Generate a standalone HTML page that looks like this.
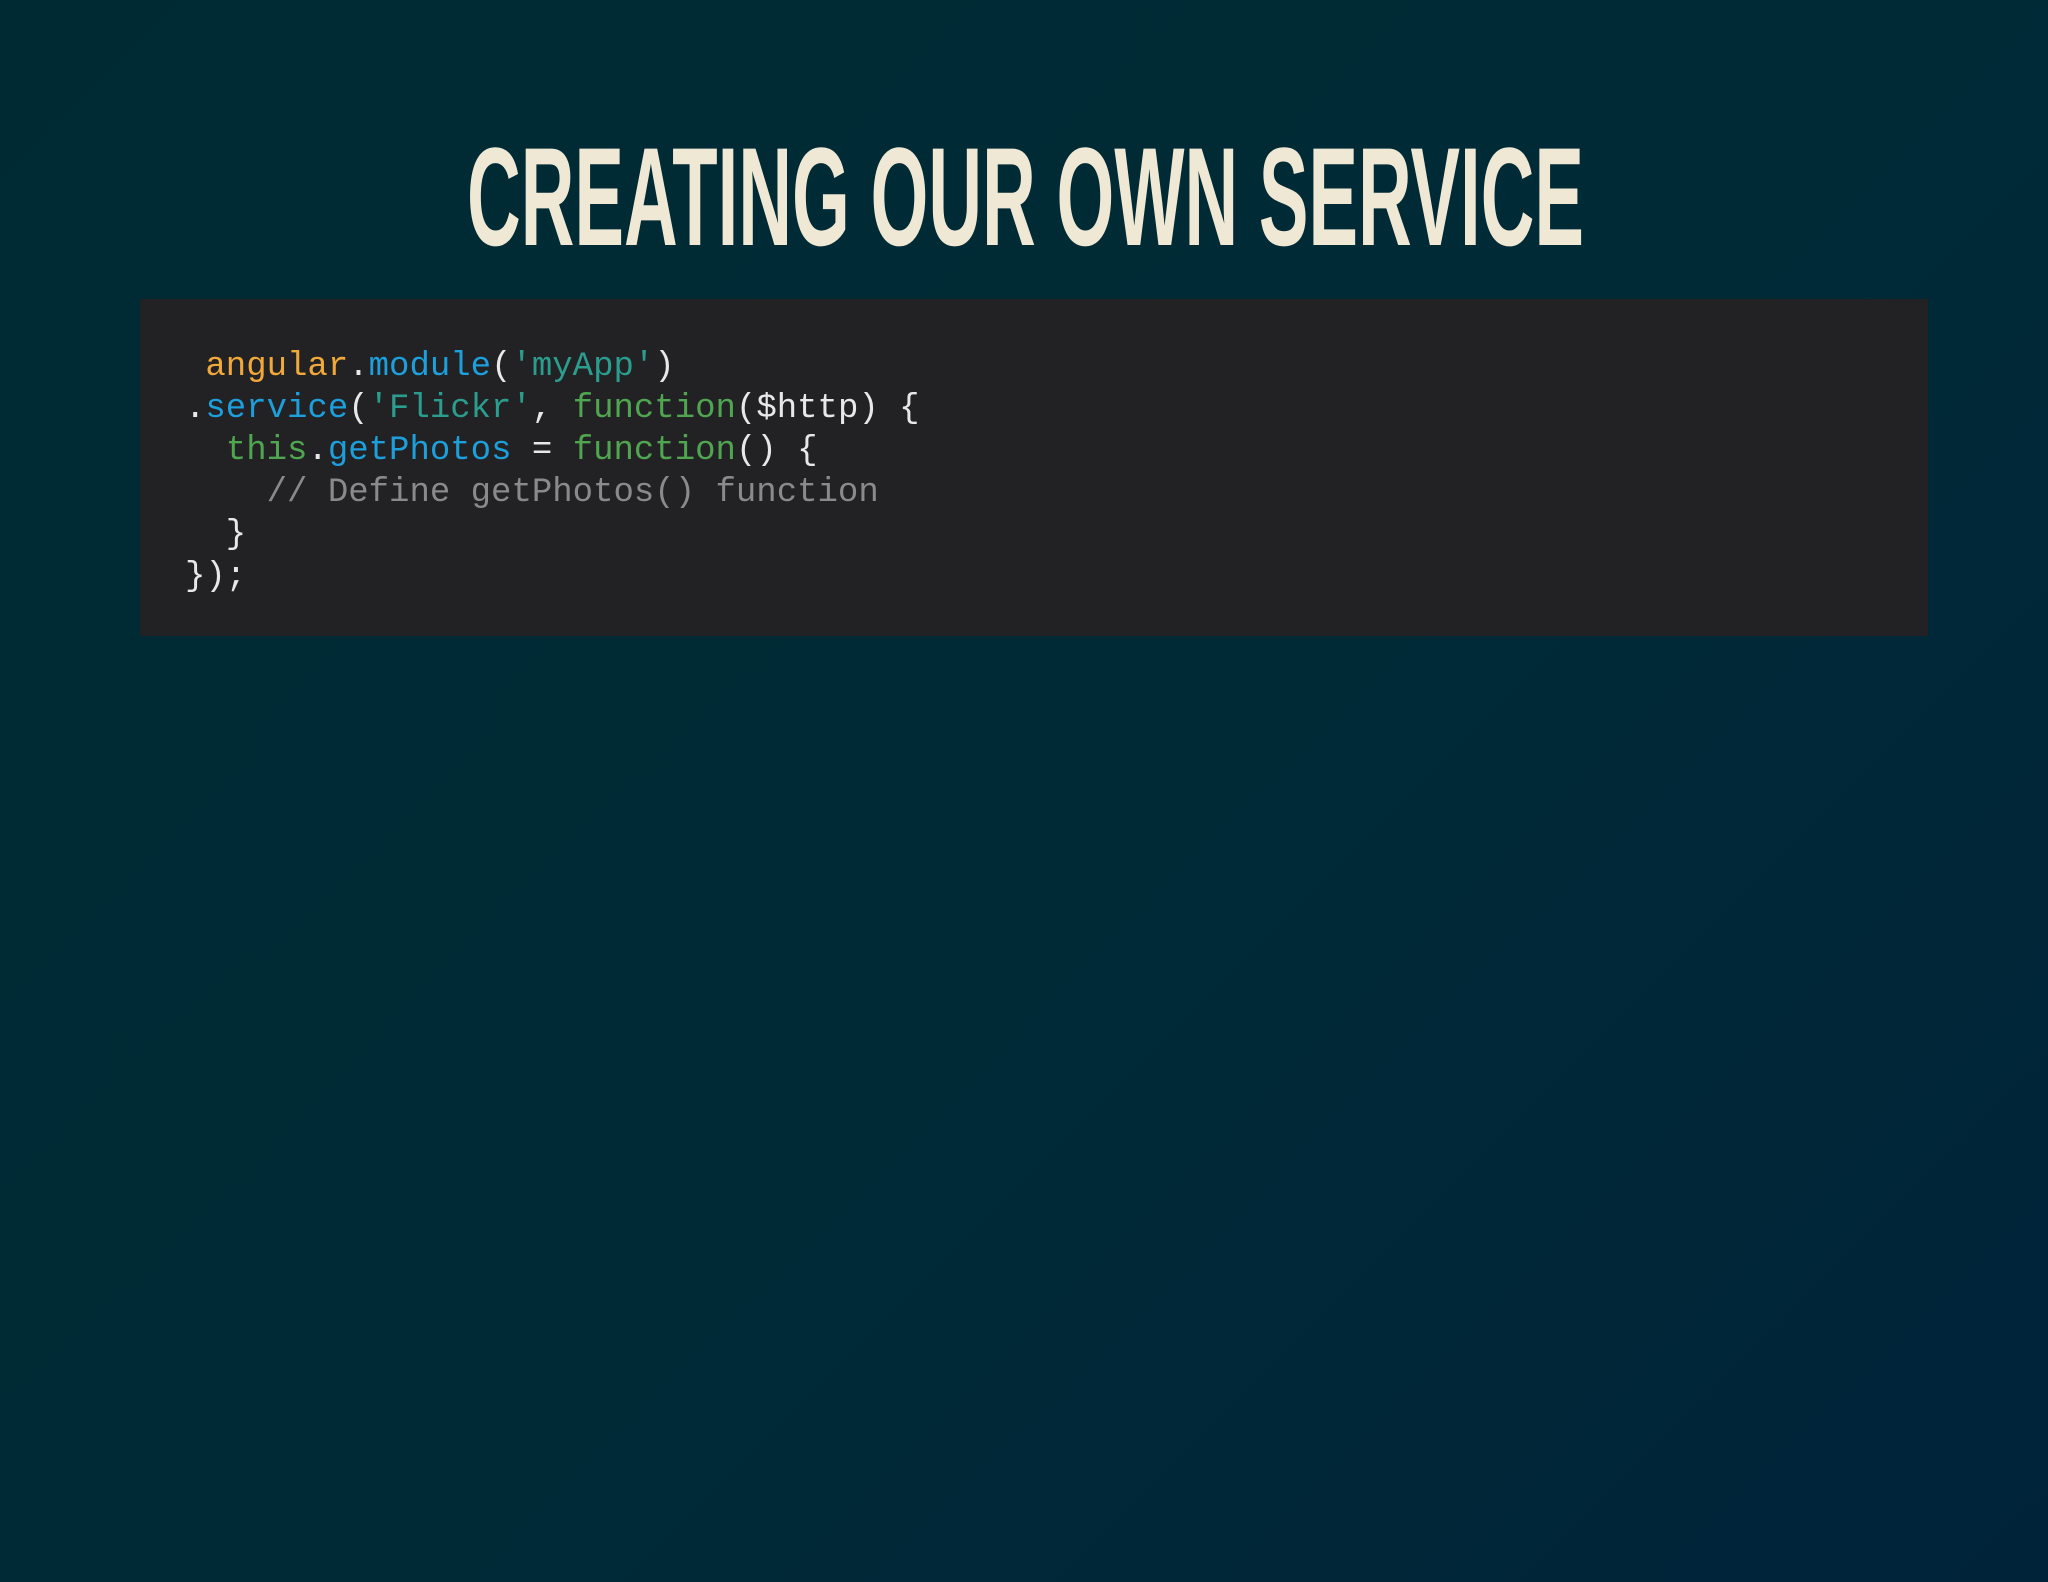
<!DOCTYPE html>
<html>
<head>
<meta charset="utf-8">
<style>
html,body{margin:0;padding:0;}
body{width:2048px;height:1582px;overflow:hidden;background:linear-gradient(135deg,#002a33 0%,#002b36 50%,#00233a 100%);position:relative;font-family:"Liberation Sans",sans-serif;}
#title{position:absolute;left:0;top:0;}
.code{position:absolute;left:140px;top:299px;width:1788px;height:337px;background:#222224;}
pre{margin:0;position:absolute;left:185px;top:346px;font-family:"Liberation Mono",monospace;font-size:34px;line-height:42px;color:#e8e8e8;}
.o{color:#f0a83a}.b{color:#1c9fdb}.t{color:#2a9d8f}.g{color:#50a550}.c{color:#8a8a8a}
</style>
</head>
<body>
<svg id="title" width="2048" height="300">
<text x="467" y="245" textLength="1117" lengthAdjust="spacingAndGlyphs" font-family="Liberation Sans, sans-serif" font-weight="bold" font-size="140" fill="#eee8d5">CREATING OUR OWN SERVICE</text>
</svg>
<div class="code"></div>
<pre> <span class="o">angular</span>.<span class="b">module</span>(<span class="t">'myApp'</span>)
.<span class="b">service</span>(<span class="t">'Flickr'</span>, <span class="g">function</span>($http) {
  <span class="g">this</span>.<span class="b">getPhotos</span> = <span class="g">function</span>() {
    <span class="c">// Define getPhotos() function</span>
  }
});</pre>
</body>
</html>
